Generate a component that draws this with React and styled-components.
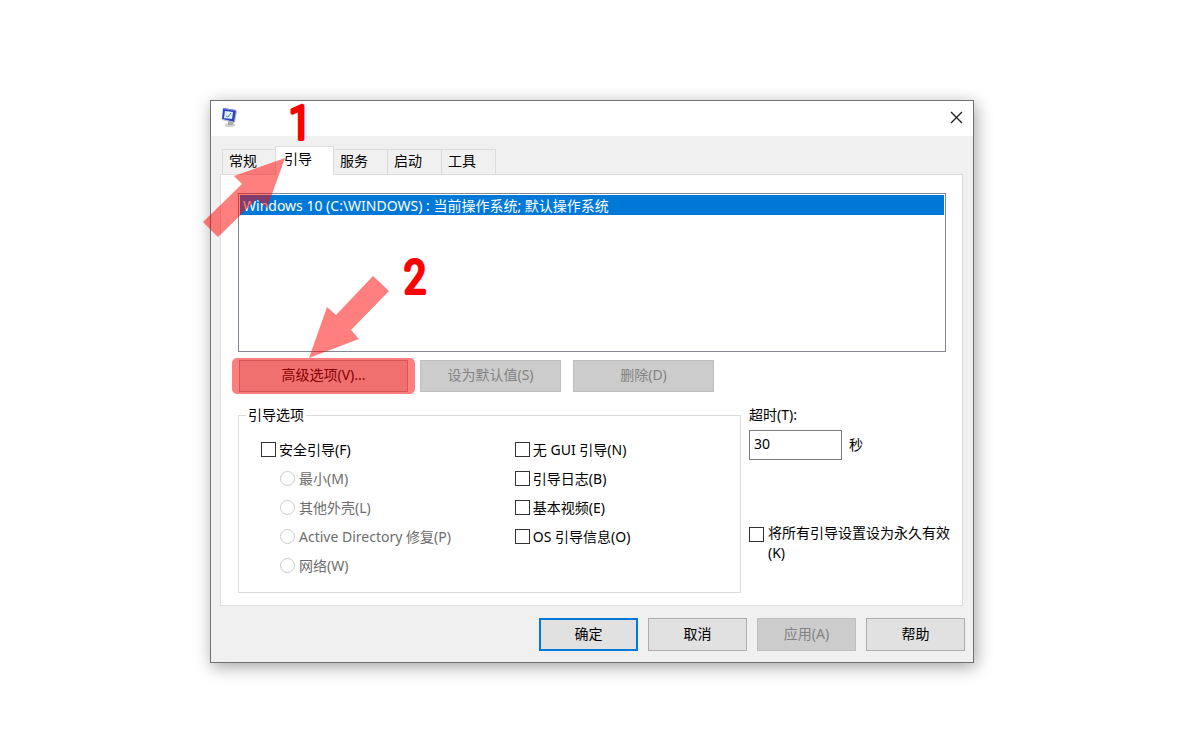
import React, { useState } from 'react';
import styled, { createGlobalStyle, css } from 'styled-components';

const GlobalStyle = createGlobalStyle`
  * {
    box-sizing: border-box;
  }

  body {
    background-color: #fff;
    color: #000;
    font-family: 'Noto Sans', 'Noto Sans CJK SC', sans-serif;
    font-size: 14px;
    line-height: 20px;
    margin: 0;
  }

  button,
  input {
    color: inherit;
    font: inherit;
    margin: 0;
  }
`;

const Page = styled.main`
  padding: 100px 220px 80px 210px;
`;

const Dialog = styled.section`
  background-color: #f0f0f0;
  border: 1px solid #707070;
  box-shadow: 2px 4px 16px rgba(0, 0, 0, 0.36);
  min-width: 720px;
  position: relative;
`;

const TitleBar = styled.header`
  align-items: center;
  background-color: #fff;
  display: flex;
  height: 35px;
  justify-content: space-between;
  padding: 0 10px 2px 10px;
`;

const CloseButton = styled.button`
  background: none;
  border: 0;
  display: flex;
  padding: 0;
`;

const TabList = styled.div`
  align-items: flex-end;
  display: flex;
  height: 39px;
  margin-bottom: -1px;
  padding-left: 11px;
  position: relative;
`;

const Tab = styled.button`
  background-color: #f0f0f0;
  border: 1px solid #dcdcdc;
  border-left-width: ${({ $first }) => ($first ? '1px' : 0)};
  height: 26px;
  padding: 0 0 2px 6px;
  text-align: left;
  width: 54px;

  ${({ $active }) =>
    $active &&
    css`
      background-color: #fff;
      border-bottom-color: #fff;
      border-left-width: 1px;
      height: 29px;
      margin-left: -1px;
      padding: 0 0 3px 8px;
      width: 59px;
    `}
`;

const Panel = styled.div`
  background-color: #fff;
  border: 1px solid #dcdcdc;
  margin: 0 10px 0 9px;
  padding: 18px 16px 12px 17px;
`;

const BootList = styled.ul`
  border: 1px solid #828790;
  height: 159px;
  list-style: none;
  margin: 0;
  padding: 1px;
`;

const BootEntry = styled.li`
  background-color: #0078d7;
  color: #fff;
  height: 20px;
  line-height: 22px;
  padding: 0 3px;
`;

const Button = styled.button`
  background-color: #e1e1e1;
  border: 1px solid #adadad;
  height: ${({ $small }) => ($small ? '32px' : '33px')};
  padding: 0 0 2px;
  width: ${({ $width }) => $width || 99}px;

  &:disabled {
    background-color: #ccc;
    border-color: #bfbfbf;
    color: #838383;
  }

  ${({ $primary }) =>
    $primary &&
    css`
      border: 2px solid #0078d7;
    `}
`;

const Actions = styled.div`
  display: flex;
  gap: 12px;
  padding: 8px 0 13px 1px;
`;

const Highlight = styled.div`
  position: relative;

  &::after {
    background-color: rgba(255, 0, 0, 0.5);
    border-radius: 5px;
    content: '';
    inset: -2px -7px;
    pointer-events: none;
    position: absolute;
  }
`;

const Settings = styled.div`
  display: grid;
  gap: 8px;
  grid-template-columns: 1fr 204px;
  margin-right: -7px;
`;

const Group = styled.fieldset`
  border: 1px solid #dcdcdc;
  margin: 0;
  min-width: 0;
  padding: 10px 0 12px 22px;
`;

const Legend = styled.legend`
  margin-left: -15px;
  padding: 0 2px;
`;

const Columns = styled.div`
  display: grid;
  grid-template-columns: 53% 1fr;
`;

const Option = styled.label`
  align-items: center;
  color: ${({ $disabled }) => ($disabled ? '#6d6d6d' : '#000')};
  display: flex;
  gap: ${({ $disabled }) => ($disabled ? '4px' : '3px')};
  height: 29px;
  padding-left: ${({ $disabled }) => ($disabled ? '19px' : 0)};
`;

const Check = styled.input`
  appearance: none;
  background-color: #fff;
  border: 1px solid #333;
  flex: none;
  height: 15px;
  width: 15px;

  &:checked {
    background-color: #0078d7;
    box-shadow: inset 0 0 0 2px #fff;
  }

  &[type='radio'] {
    border-color: #ccc;
    border-radius: 50%;
  }
`;

const Side = styled.div`
  display: flex;
  flex-direction: column;
`;

const TimeoutRow = styled.div`
  align-items: center;
  display: flex;
  gap: 7px;
  padding-top: 5px;
`;

const TimeoutInput = styled.input`
  border: 1px solid #7a7a7a;
  height: 30px;
  padding: 0 4px 3px;
  width: 93px;
`;

const Permanent = styled.label`
  display: flex;
  gap: 4px;
  padding-top: 63px;

  ${Check} {
    margin-top: 4px;
  }
`;

const Footer = styled.footer`
  display: flex;
  gap: 10px;
  justify-content: flex-end;
  padding: 12px 8px 11px;
`;

const Annotation = styled.svg`
  left: -8px;
  overflow: visible;
  pointer-events: none;
  position: absolute;
  top: 0;
`;

const Arrow = styled.path`
  fill: rgba(255, 0, 0, 0.5);
`;

const Step = styled.text`
  fill: #f00;
  font-family: 'Roboto Condensed', Roboto, sans-serif;
  font-size: 46px;
  font-weight: 300;
  stroke: #f00;
  stroke-linejoin: round;
  stroke-width: 4px;
  text-anchor: middle;
`;

const tabs = ['常规', '引导', '服务', '启动', '工具'];
const modes = ['最小(M)', '其他外壳(L)', 'Active Directory 修复(P)', '网络(W)'];
const flags = ['无 GUI 引导(N)', '引导日志(B)', '基本视频(E)', 'OS 引导信息(O)'];

const ComputerIcon = () => (
  <svg width="17" height="20" viewBox="0 0 17 20" aria-hidden="true">
    <ellipse cx="9" cy="17" rx="5" ry="2" fill="#cfcfcf" />
    <path d="M7 13l5 1v3H7z" fill="#aaa" />
    <path d="M14 2l2 1-2 11-2 1z" fill="#b5b8bd" />
    <path d="M2 0l13 2-2 12L1 11z" fill="#2d44c4" />
    <path d="M2 0l13 2v1L2 1z" fill="#8b94cf" />
    <path d="M4 3l8 1-1 7-8-1z" fill="#e2effc" />
    <path d="M5 8l2 1 3-4" fill="none" stroke="#3d91c9" />
    <path d="M1 11l12 3v1L1 12z" fill="#b8bac4" />
  </svg>
);

const CloseIcon = () => (
  <svg width="13" height="13" viewBox="0 0 13 13" aria-hidden="true">
    <path d="M1 1l11 11M12 1L1 12" fill="none" stroke="#222" strokeWidth="1.4" />
  </svg>
);

const App = () => {
  const [active, setActive] = useState('引导');
  const [timeout, setTimeoutValue] = useState('30');

  return (
    <Page>
      <GlobalStyle />
      <Dialog role="dialog">
        <TitleBar>
          <ComputerIcon />
          <CloseButton type="button" aria-label="关闭">
            <CloseIcon />
          </CloseButton>
        </TitleBar>

        <TabList role="tablist">
          {tabs.map((tab, index) => (
            <Tab
              key={tab}
              type="button"
              role="tab"
              aria-selected={tab === active}
              $active={tab === active}
              $first={index === 0}
              onClick={() => setActive(tab)}
            >
              {tab}
            </Tab>
          ))}
        </TabList>

        <Panel role="tabpanel">
          <BootList role="listbox">
            <BootEntry role="option" aria-selected="true">
              Windows 10 (C:\WINDOWS) : 当前操作系统; 默认操作系统
            </BootEntry>
          </BootList>

          <Actions>
            <Highlight>
              <Button type="button" $small $width={169}>
                高级选项(V)...
              </Button>
            </Highlight>
            <Button type="button" $small $width={141} disabled>
              设为默认值(S)
            </Button>
            <Button type="button" $small $width={141} disabled>
              删除(D)
            </Button>
          </Actions>

          <Settings>
            <Group>
              <Legend>引导选项</Legend>
              <Columns>
                <div>
                  <Option>
                    <Check type="checkbox" />
                    安全引导(F)
                  </Option>
                  {modes.map((mode) => (
                    <Option key={mode} $disabled>
                      <Check type="radio" name="mode" disabled />
                      {mode}
                    </Option>
                  ))}
                </div>
                <div>
                  {flags.map((flag) => (
                    <Option key={flag}>
                      <Check type="checkbox" />
                      {flag}
                    </Option>
                  ))}
                </div>
              </Columns>
            </Group>

            <Side>
              <label htmlFor="timeout">超时(T):</label>
              <TimeoutRow>
                <TimeoutInput
                  id="timeout"
                  value={timeout}
                  onChange={(event) => setTimeoutValue(event.target.value)}
                />
                秒
              </TimeoutRow>
              <Permanent>
                <Check type="checkbox" />
                <span>将所有引导设置设为永久有效(K)</span>
              </Permanent>
            </Side>
          </Settings>
        </Panel>

        <Footer>
          <Button type="button" $primary>
            确定
          </Button>
          <Button type="button">取消</Button>
          <Button type="button" disabled>
            应用(A)
          </Button>
          <Button type="button">帮助</Button>
        </Footer>

        <Annotation width="240" height="260" viewBox="203 101 240 260">
          <Arrow d="M285 158L234 176L242 184L203 222L218 237L257 199L267 208Z" />
          <Arrow d="M309 358L327 307L336 315L373 276L389 291L351 330L359 339Z" />
          <Step x="300" y="139">1</Step>
          <Step x="415" y="293">2</Step>
        </Annotation>
      </Dialog>
    </Page>
  );
};

export default App;
